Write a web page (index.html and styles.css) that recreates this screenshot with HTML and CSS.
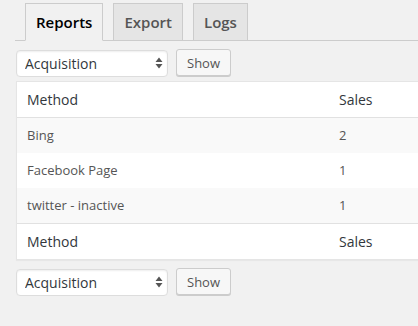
FILE: index.html
```html
<!DOCTYPE html>
<html lang="en">
  <head>
    <meta charset="UTF-8" />
    <meta name="viewport" content="width=device-width, initial-scale=1.0" />
    <title>Reports</title>
    <link rel="stylesheet" href="styles.css">
  </head>
  <body>
    <div class="wrap">
      <h2 class="nav-tab-wrapper">
        <a href="#" class="nav-tab nav-tab-active">Reports</a>
        <a href="#" class="nav-tab">Export</a>
        <a href="#" class="nav-tab">Logs</a>
      </h2>

      <form class="report-filter">
        <span class="select-box">
          <select name="report">
            <option>Acquisition</option>
            <option>Revenue</option>
          </select>
          <svg class="select-arrows" width="8" height="12" viewBox="0 0 8 12">
            <path d="M4 0.5 L7.5 5 L0.5 5 Z M4 11.5 L7.5 7 L0.5 7 Z" fill="#555" />
          </svg>
        </span>
        <button type="submit" class="button">Show</button>
      </form>

      <table class="widefat striped">
        <colgroup>
          <col class="col-method" />
          <col />
        </colgroup>
        <thead>
          <tr>
            <th>Method</th>
            <th>Sales</th>
          </tr>
        </thead>
        <tbody>
          <tr>
            <td>Bing</td>
            <td>2</td>
          </tr>
          <tr>
            <td>Facebook Page</td>
            <td>1</td>
          </tr>
          <tr>
            <td>twitter - inactive</td>
            <td>1</td>
          </tr>
        </tbody>
        <tfoot>
          <tr>
            <th>Method</th>
            <th>Sales</th>
          </tr>
        </tfoot>
      </table>

      <form class="report-filter report-filter-bottom">
        <span class="select-box">
          <select name="report2">
            <option>Acquisition</option>
            <option>Revenue</option>
          </select>
          <svg class="select-arrows" width="8" height="12" viewBox="0 0 8 12">
            <path d="M4 0.5 L7.5 5 L0.5 5 Z M4 11.5 L7.5 7 L0.5 7 Z" fill="#555" />
          </svg>
        </span>
        <button type="submit" class="button">Show</button>
      </form>
    </div>
  </body>
</html>
```

FILE: styles.css
```css
html {
  overflow: hidden;
}

body {
  margin: 0;
  padding: 0;
  background-color: #f1f1f1;
  font-family: "Open Sans", "Liberation Sans", sans-serif;
  color: #444;
}

.wrap {
  width: 600px;
  padding-left: 16px;
}

.nav-tab-wrapper {
  display: flex;
  align-items: flex-end;
  margin: 0 0 0 -1px;
  padding: 3px 0 0 0;
  border-bottom: 1px solid #ccc;
  font-size: 15px;
  line-height: 24px;
}

.nav-tab {
  margin-left: 10px;
  padding: 6px 10px;
  border: 1px solid #ccc;
  border-bottom: none;
  background-color: #e5e5e5;
  color: #555;
  font-weight: 600;
  text-decoration: none;
  white-space: nowrap;
}

.nav-tab-active {
  background-color: #f1f1f1;
  color: #000;
  border-bottom: 1px solid #f1f1f1;
  margin-bottom: -1px;
}

.report-filter {
  display: flex;
  align-items: flex-start;
  gap: 8px;
  margin: 8px 0 4px 0;
}

.report-filter-bottom {
  margin-top: 8px;
}

.select-box {
  position: relative;
  display: block;
  margin-top: 1px;
}

.select-box select {
  display: block;
  width: 152px;
  height: 27px;
  padding: 0 24px 0 8px;
  border: 1px solid #ddd;
  border-radius: 4px;
  background-color: #fff;
  box-shadow: inset 0 1px 2px rgba(0, 0, 0, 0.07);
  font-family: inherit;
  font-size: 14px;
  color: #32373c;
  appearance: none;
  -webkit-appearance: none;
}

.select-arrows {
  position: absolute;
  right: 5px;
  top: 7px;
  pointer-events: none;
}

.button {
  height: 27px;
  padding: 0 10px;
  border: 1px solid #ccc;
  border-radius: 3px;
  background-color: #f7f7f7;
  box-shadow: 0 1px 0 #ccc;
  font-family: inherit;
  font-size: 13px;
  color: #555;
  cursor: pointer;
}

.widefat {
  width: 560px;
  table-layout: fixed;
  border-spacing: 0;
  border: 1px solid #e5e5e5;
  background-color: #fff;
  box-shadow: 0 1px 1px rgba(0, 0, 0, 0.04);
}

.col-method {
  width: 312px;
}

.widefat th {
  padding: 8px 10px;
  font-size: 14px;
  line-height: 19px;
  font-weight: 400;
  text-align: left;
  color: #32373c;
}

.widefat thead th {
  border-bottom: 1px solid #e1e1e1;
}

.widefat tfoot th {
  border-top: 1px solid #e1e1e1;
}

.widefat td {
  padding: 8px 10px;
  font-size: 13px;
  line-height: 19px;
  color: #555;
}

.striped tbody tr:nth-child(odd) {
  background-color: #f9f9f9;
}
```
